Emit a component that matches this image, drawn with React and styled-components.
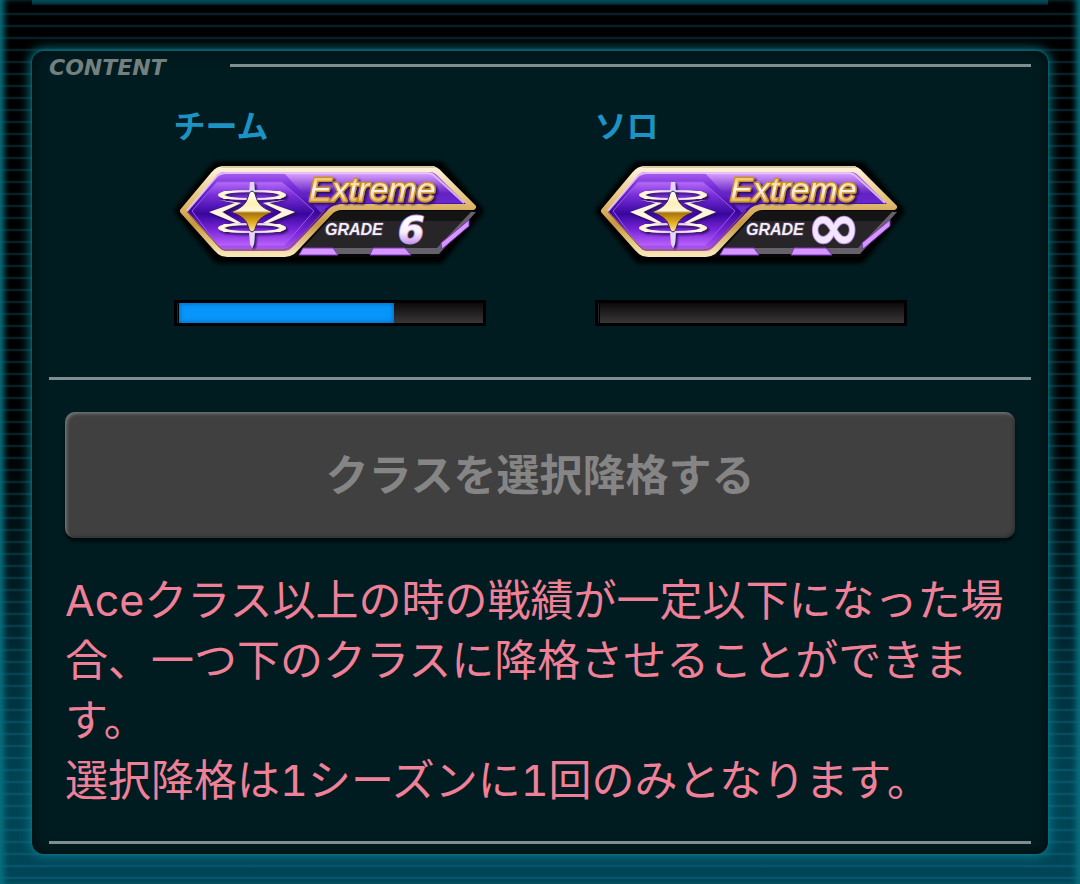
import React from 'react';
import styled, { createGlobalStyle } from 'styled-components';

const GlobalStyle = createGlobalStyle`
  *, *::before, *::after {
    box-sizing: border-box;
  }

  body {
    margin: 0;
    background: #000;
    font-family: "Noto Sans CJK JP", "Noto Sans", sans-serif;
  }
`;

const Page = styled.div`
  min-height: 100vh;
  padding: 51px 32px 30px;
  overflow: hidden;
  background:
    linear-gradient(to bottom, #063c4a 3px, rgba(6, 60, 74, 0) 6px) 32px 0 / calc(100% - 64px) 6px no-repeat,
    repeating-linear-gradient(
      to bottom,
      rgba(0, 130, 160, 0) 0 8px,
      rgba(40, 130, 160, 0.12) 9px,
      rgba(40, 130, 160, 0.34) 10px,
      rgba(40, 130, 160, 0.12) 11px,
      rgba(0, 130, 160, 0) 12px
    ) 0 4px,
    linear-gradient(to bottom, #000 0%, #000 50%, #004353 88%, #004658 100%);
  box-shadow:
    inset 7px 0 6px -3px #087282,
    inset -7px 0 6px -3px #087282;
`;

const Panel = styled.main`
  padding: 1px 17px 10px;
  border-radius: 12px;
  background: #001c20;
  box-shadow:
    0 0 12px 2px #08798a,
    0 0 3px #17707e,
    inset 0 0 14px rgba(0, 0, 0, 0.6);
`;

const Header = styled.header`
  display: flex;
  align-items: center;
  height: 26px;
`;

const Title = styled.h1`
  flex: 0 0 181px;
  margin: 0;
  padding-top: 6px;
  color: #74807f;
  font: italic 700 22px/24px "DejaVu Sans", sans-serif;
`;

const Rule = styled.hr`
  flex: 1;
  height: 3px;
  margin: 0;
  border: 0;
  background: #7f8f90;
`;

const Classes = styled.section`
  display: grid;
  grid-template-columns: repeat(2, minmax(0, 312px));
  justify-content: center;
  column-gap: 109px;
  padding: 22px 0 51px;
`;

const ClassItem = styled.div`
  display: flex;
  flex-direction: column;
`;

const ClassName = styled.h2`
  margin: 0 0 12px;
  color: #1b93c4;
  font-size: 32px;
  font-weight: 700;
  line-height: 48px;
`;

const Badge = styled.svg`
  display: block;
  width: 100%;
  height: auto;
  overflow: visible;
`;

const Gauge = styled.progress`
  appearance: none;
  display: block;
  width: 100%;
  height: 26px;
  margin-top: 30px;
  padding-left: 1px;
  border: 3px solid #000;
  background: #222;

  &::-webkit-progress-bar {
    border-left: 1px solid #000;
    background: linear-gradient(#0c0a0b, #383637);
  }

  &::-webkit-progress-value {
    background: #0795fa;
    box-shadow: inset 0 0 5px rgba(0, 50, 110, 0.6);
  }
`;

const Actions = styled.section`
  padding: 32px 16px 31px;
`;

const DemoteButton = styled.button`
  display: block;
  width: 100%;
  height: 126px;
  padding: 0 0 6px;
  border: 0;
  border-radius: 10px;
  background: #404040;
  color: #858585;
  font-family: inherit;
  font-size: 43px;
  font-weight: 700;
  line-height: 60px;
  box-shadow:
    inset 2px 2px 3px #6c7272,
    inset -2px -2px 3px #303333,
    0 4px 3px #000d10;
`;

const Note = styled.p`
  margin: 32px 0 0;
  color: #f08098;
  font-family: Inter, "Noto Sans CJK JP", sans-serif;
  font-size: 43px;
  font-variant-numeric: tabular-nums;
  line-height: 60px;
`;

const classes = [
  { id: 'team', name: 'チーム', grade: '6', progress: 71 },
  { id: 'solo', name: 'ソロ', grade: '∞', progress: 0 },
];

const ClassBadge = ({ id, grade }) => (
  <Badge viewBox="0 0 312 110" role="img" aria-label={`Extreme GRADE ${grade}`}>
    <defs>
      <linearGradient id={`${id}-frame`} x1="0" y1="0" x2="0" y2="1">
        <stop offset="0" stopColor="#fff0d8" />
        <stop offset="0.3" stopColor="#e9c987" />
        <stop offset="0.65" stopColor="#c8973f" />
        <stop offset="1" stopColor="#f7e6b4" />
      </linearGradient>
      <linearGradient id={`${id}-purple`} x1="0" y1="0" x2="0" y2="1">
        <stop offset="0" stopColor="#b66cf8" />
        <stop offset="0.2" stopColor="#7a2fdb" />
        <stop offset="0.5" stopColor="#38069c" />
        <stop offset="0.75" stopColor="#7926d8" />
        <stop offset="1" stopColor="#bd62ff" />
      </linearGradient>
      <linearGradient id={`${id}-strip`} x1="0" y1="0" x2="0" y2="1">
        <stop offset="0" stopColor="#dda4ff" />
        <stop offset="0.5" stopColor="#6422c4" />
        <stop offset="1" stopColor="#6a2bd0" />
      </linearGradient>
      <linearGradient id={`${id}-gold`} x1="0" y1="0" x2="0" y2="1">
        <stop offset="0" stopColor="#ffffff" />
        <stop offset="0.3" stopColor="#fff0b8" />
        <stop offset="0.48" stopColor="#fff6d8" />
        <stop offset="0.54" stopColor="#a8740a" />
        <stop offset="0.75" stopColor="#e0a91c" />
        <stop offset="1" stopColor="#ffe9a0" />
      </linearGradient>
      <linearGradient id={`${id}-ring`} x1="0" y1="0" x2="1" y2="0">
        <stop offset="0" stopColor="#f6e2a4" />
        <stop offset="0.2" stopColor="#fff8e4" />
        <stop offset="0.5" stopColor="#d5c4f2" />
        <stop offset="0.8" stopColor="#fff8e4" />
        <stop offset="1" stopColor="#f6e2a4" />
      </linearGradient>
      <linearGradient id={`${id}-word`} x1="0" y1="0" x2="0" y2="1">
        <stop offset="0.2" stopColor="#f0c465" />
        <stop offset="0.5" stopColor="#fff6ea" />
        <stop offset="0.7" stopColor="#f5d9b4" />
        <stop offset="0.85" stopColor="#e3a93a" />
      </linearGradient>
      <linearGradient id={`${id}-grade`} x1="0" y1="0" x2="0" y2="1">
        <stop offset="0.2" stopColor="#ffffff" />
        <stop offset="0.55" stopColor="#f7efff" />
        <stop offset="0.8" stopColor="#c89af0" />
      </linearGradient>
      <filter id={`${id}-soft`} x="-10%" y="-20%" width="120%" height="140%">
        <feGaussianBlur stdDeviation="2" />
      </filter>
      <filter id={`${id}-shade`} x="-10%" y="-20%" width="120%" height="140%">
        <feDropShadow dx="2" dy="2" stdDeviation="1" floodColor="#2a0a5c" />
      </filter>
    </defs>

    <path
      d="M5 51 42 6H266L305 51 266 99H44Z"
      stroke="#000"
      strokeWidth="9"
      strokeLinejoin="round"
      filter={`url(#${id}-soft)`}
    />
    <path d="M6 50 42 7Q44 5 47 5H260Q263 5 266 8L303 50 265 97H46Z" fill="#080708" />

    {/* dark grade plate */}
    <path d="M163 51H299L264 90H127Z" fill="#272527" />
    <path d="M163 51H299L290 61H155Z" fill="#151415" />
    <path d="M130 88H263L297 52 302 52 265 94H125Z" fill="#67616b" />

    {/* purple body and gold frame */}
    <path
      d="M9 51 40 14Q44 9 50 9H256Q262 9 266 14L299 47H168Q160 47 155 53L122 88Q117 94 111 94H53Q47 94 43 89Z"
      fill={`url(#${id}-purple)`}
      stroke={`url(#${id}-frame)`}
      strokeWidth="6"
      strokeLinejoin="round"
    />
    <path d="M48 7H260" stroke="#d9cda9" strokeWidth="2" strokeLinecap="round" />
    <path d="M110 13H257L289 43H165Q157 43 151 49L147 53Z" fill={`url(#${id}-strip)`} />
    <path
      d="M13 51 42 17Q46 13 52 13H254Q258 13 262 17L290 43"
      fill="none"
      stroke="#eed2ff"
      strokeWidth="2"
      strokeOpacity="0.8"
    />
    <path
      d="M18 51 43 22H108L140 51 110 86H44Z"
      fill={`url(#${id}-purple)`}
      stroke="#9a58e4"
      strokeWidth="1"
    />
    <path d="M13 52 45 87Q47 90 52 90H108Q114 90 119 85L151 50" fill="none" stroke="#8e611d" strokeWidth="1" />

    {/* emblem */}
    <g filter={`url(#${id}-shade)`}>
      <g fill="none" stroke={`url(#${id}-ring)`}>
        <ellipse cx="78" cy="35" rx="33" ry="4" strokeWidth="2" />
        <ellipse cx="78" cy="68" rx="33" ry="4" strokeWidth="2" />
      </g>
      <g fill="#fff6dc">
        <path d="M44 35 50 31 60 31 50 35 60 39 50 39Z" />
        <path d="M112 35 106 31 96 31 106 35 96 39 106 39Z" />
        <path d="M44 68 50 64 60 64 50 68 60 72 50 72Z" />
        <path d="M112 68 106 64 96 64 106 68 96 72 106 72Z" />
        <path d="M45 40 61 43 35 52 62 63 45 66 67 63 48 52 67 43Z" />
        <path d="M111 40 95 43 121 52 94 63 111 66 89 63 108 52 89 43Z" />
        <path d="M76 22H80L81 33H75ZM75 71H81L80 84 78 88 76 84Z" fill="#e4d5fa" />
      </g>
    </g>
    <path
      d="M78 31Q81 31 82 37 84 47 99 52 84 57 82 66 81 72 78 72 75 72 74 66 72 57 57 52 72 47 74 37 75 31 78 31Z"
      fill={`url(#${id}-gold)`}
      stroke="#3a2160"
      strokeWidth="1"
    />

    {/* accent lights */}
    <g fill="#d597ff" stroke="#7f35c4" strokeWidth="1">
      <path d="M129 88H159L164 95H125Z" />
      <path d="M199 88H231L237 95H196Z" />
      <path d="M295 60V66L268 89 267 83Z" />
    </g>

    <g
      fontFamily="'Liberation Sans', Arial, sans-serif"
      fontWeight="700"
      fontStyle="italic"
      paintOrder="stroke"
      strokeLinejoin="round"
    >
      <text
        x="135"
        y="41"
        fontSize="34"
        fontWeight="400"
        fill={`url(#${id}-word)`}
        stroke="#cb922a"
        strokeWidth="3"
        filter={`url(#${id}-shade)`}
      >
        Extreme
      </text>
      <text x="151" y="75" fontSize="16" fill="#f4eefa" stroke="#443b4c" strokeWidth="2">
        GRADE
      </text>
      <text
        x={grade === '∞' ? 212 : 224}
        y={grade === '∞' ? 89 : 83}
        fontFamily="'DejaVu Sans', sans-serif"
        fontStyle={grade === '∞' ? 'normal' : 'italic'}
        fontSize={grade === '∞' ? 64 : 38}
        fill={grade === '∞' ? '#f3e6ff' : `url(#${id}-grade)`}
        stroke="#b78fdc"
        strokeWidth="2"
      >
        {grade}
      </text>
    </g>
  </Badge>
);

const App = () => (
  <>
    <GlobalStyle />
    <Page>
      <Panel>
        <Header>
          <Title>CONTENT</Title>
          <Rule />
        </Header>
        <Classes>
          {classes.map(({ id, name, grade, progress }) => (
            <ClassItem key={id}>
              <ClassName id={`${id}-label`}>{name}</ClassName>
              <ClassBadge id={id} grade={grade} />
              <Gauge max="100" value={progress} aria-labelledby={`${id}-label`} />
            </ClassItem>
          ))}
        </Classes>
        <Rule />
        <Actions>
          <DemoteButton type="button" disabled>クラスを選択降格する</DemoteButton>
          <Note>
            Aceクラス以上の時の戦績が一定以下になった場合、一つ下のクラスに降格させることができます。
            <br />
            選択降格は1シーズンに1回のみとなります。
          </Note>
        </Actions>
        <Rule />
      </Panel>
    </Page>
  </>
);

export default App;
